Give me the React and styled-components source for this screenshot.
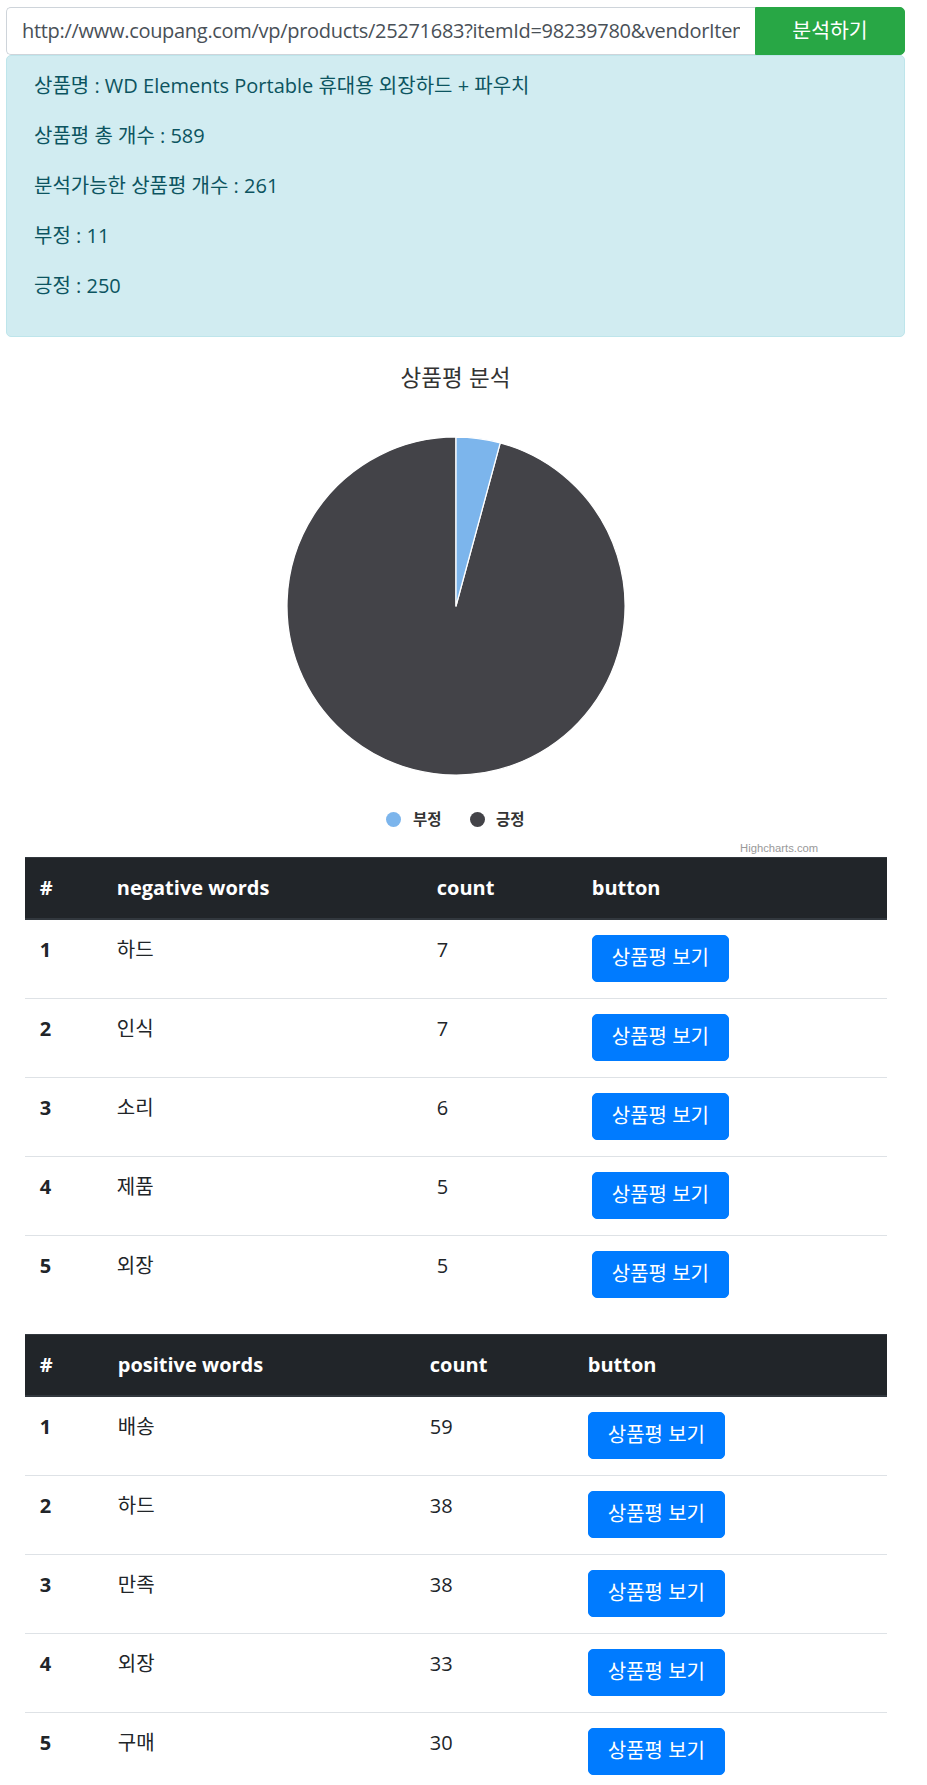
import React from "react";
import styled, { createGlobalStyle } from "styled-components";

const GlobalStyle = createGlobalStyle`
  * {
    box-sizing: border-box;
  }
  html,
  body {
    margin: 0;
    padding: 0;
    background: #fff;
  }
  body {
    font-family: "Open Sans", "Noto Sans CJK KR", sans-serif;
    font-size: 20px;
    line-height: 1.5;
    color: #212529;
  }
`;

const Page = styled.div`
  width: 899px;
  margin: 7px 0 0 6px;
`;

const SearchBar = styled.div`
  display: flex;
  height: 47.5px;
`;

const UrlInput = styled.input`
  flex: 1;
  min-width: 0;
  height: 100%;
  padding: 7.5px 15px;
  font: inherit;
  letter-spacing: -0.3px;
  color: #495057;
  background: #fff;
  border: 1.25px solid #ced4da;
  border-right: none;
  border-radius: 5px 0 0 5px;
  outline: none;
`;

const AnalyzeButton = styled.button`
  width: 150px;
  height: 100%;
  font: inherit;
  font-size: 20.5px;
  color: #fff;
  background: #28a745;
  border: 1.25px solid #28a745;
  border-radius: 0 5px 5px 0;
  cursor: pointer;
`;

const Summary = styled.div`
  padding: 15px 27px;
  margin-bottom: 20px;
  color: #0c5460;
  background: #d1ecf1;
  border: 1.25px solid #bee5eb;
  border-radius: 5px;
`;

const SummaryLine = styled.p`
  margin: 0 0 20px;
`;

const Section = styled.div`
  padding: 0 18.75px;
`;

const ChartBox = styled.div`
  height: 500px;
  display: flex;
  flex-direction: column;
  align-items: center;
  padding-top: 7px;
  font-family: "Liberation Sans", "Noto Sans CJK KR", sans-serif;
`;

const ChartTitle = styled.div`
  font-size: 22.5px;
  line-height: 30px;
  color: #333;
`;

const PieSvg = styled.svg`
  display: block;
  margin-top: 42px;
`;

const Legend = styled.div`
  display: flex;
  align-items: center;
  gap: 28px;
  height: 20px;
  margin-top: 34px;
`;

const LegendItem = styled.div`
  display: flex;
  align-items: center;
  gap: 11.5px;
  font-size: 15.5px;
  font-weight: 700;
  line-height: 20px;
  color: #333;
`;

const LegendDot = styled.span`
  width: 15px;
  height: 15px;
  border-radius: 50%;
  background: ${(p) => p.$color};
`;

const Credits = styled.div`
  align-self: stretch;
  margin-top: 11px;
  padding-right: 68px;
  text-align: right;
  font-size: 11.25px;
  line-height: 15px;
  color: #999;
`;

const WordTable = styled.table`
  width: 100%;
  margin-bottom: 20px;
  border-collapse: collapse;
  table-layout: fixed;
  color: #212529;
`;

const HeadCell = styled.th`
  width: ${(p) => p.$w}px;
  padding: 15px;
  text-align: left;
  vertical-align: bottom;
  font-weight: 700;
  color: #fff;
  background: #212529;
  border-top: 1.25px solid #32383e;
  border-bottom: 2.5px solid #32383e;
`;

const RowHead = styled.th`
  padding: 15px 15px 16px;
  text-align: left;
  vertical-align: top;
  font-weight: 700;
  border-top: 1.25px solid #dee2e6;
`;

const Cell = styled.td`
  padding: 15px 15px 16px;
  vertical-align: top;
  border-top: 1.25px solid #dee2e6;
`;

const ViewButton = styled.button`
  padding: 7.5px 19px;
  font: inherit;
  line-height: 1.5;
  color: #fff;
  background: #007bff;
  border: 1.25px solid #007bff;
  border-radius: 5px;
  cursor: pointer;
`;

const negativeWords = [
  { word: "하드", count: 7 },
  { word: "인식", count: 7 },
  { word: "소리", count: 6 },
  { word: "제품", count: 5 },
  { word: "외장", count: 5 },
];

const positiveWords = [
  { word: "배송", count: 59 },
  { word: "하드", count: 38 },
  { word: "만족", count: 38 },
  { word: "외장", count: 33 },
  { word: "구매", count: 30 },
];

const NEG = 11;
const POS = 250;

const PieChart = () => {
  const r = 169;
  const c = 170;
  const angle = (NEG / (NEG + POS)) * Math.PI * 2;
  const x = c + r * Math.sin(angle);
  const y = c - r * Math.cos(angle);
  return (
    <PieSvg width="340" height="340" viewBox="0 0 340 340">
      <path
        d={`M${c} ${c} L${x} ${y} A${r} ${r} 0 1 1 ${c} ${c - r} Z`}
        fill="#434348"
        stroke="#fff"
        strokeWidth="1.25"
        strokeLinejoin="round"
      />
      <path
        d={`M${c} ${c} L${c} ${c - r} A${r} ${r} 0 0 1 ${x} ${y} Z`}
        fill="#7cb5ec"
        stroke="#fff"
        strokeWidth="1.25"
        strokeLinejoin="round"
      />
    </PieSvg>
  );
};

const WordsTable = ({ title, words, widths }) => (
  <WordTable>
    <thead>
      <tr>
        <HeadCell $w={widths[0]}>#</HeadCell>
        <HeadCell $w={widths[1]}>{title}</HeadCell>
        <HeadCell $w={widths[2]}>count</HeadCell>
        <HeadCell $w={widths[3]}>button</HeadCell>
      </tr>
    </thead>
    <tbody>
      {words.map((w, i) => (
        <tr key={i}>
          <RowHead scope="row">{i + 1}</RowHead>
          <Cell>{w.word}</Cell>
          <Cell>{w.count}</Cell>
          <Cell>
            <ViewButton>상품평 보기</ViewButton>
          </Cell>
        </tr>
      ))}
    </tbody>
  </WordTable>
);

export default function App() {
  return (
    <>
      <GlobalStyle />
      <Page>
        <SearchBar>
          <UrlInput
            defaultValue="http://www.coupang.com/vp/products/25271683?itemId=98239780&vendorItemId=3000000000"
          />
          <AnalyzeButton>분석하기</AnalyzeButton>
        </SearchBar>
        <Summary>
          <SummaryLine>상품명 : WD Elements Portable 휴대용 외장하드 + 파우치</SummaryLine>
          <SummaryLine>상품평 총 개수 : 589</SummaryLine>
          <SummaryLine>분석가능한 상품평 개수 : 261</SummaryLine>
          <SummaryLine>부정 : {NEG}</SummaryLine>
          <SummaryLine>긍정 : {POS}</SummaryLine>
        </Summary>
        <Section>
          <ChartBox>
            <ChartTitle>상품평 분석</ChartTitle>
            <PieChart />
            <Legend>
              <LegendItem>
                <LegendDot $color="#7cb5ec" />
                부정
              </LegendItem>
              <LegendItem>
                <LegendDot $color="#434348" />
                긍정
              </LegendItem>
            </Legend>
            <Credits>Highcharts.com</Credits>
          </ChartBox>
          <WordsTable
            title="negative words"
            words={negativeWords}
            widths={[77, 320, 155, 310]}
          />
          <WordsTable
            title="positive words"
            words={positiveWords}
            widths={[78, 312, 158, 314]}
          />
        </Section>
      </Page>
    </>
  );
}
